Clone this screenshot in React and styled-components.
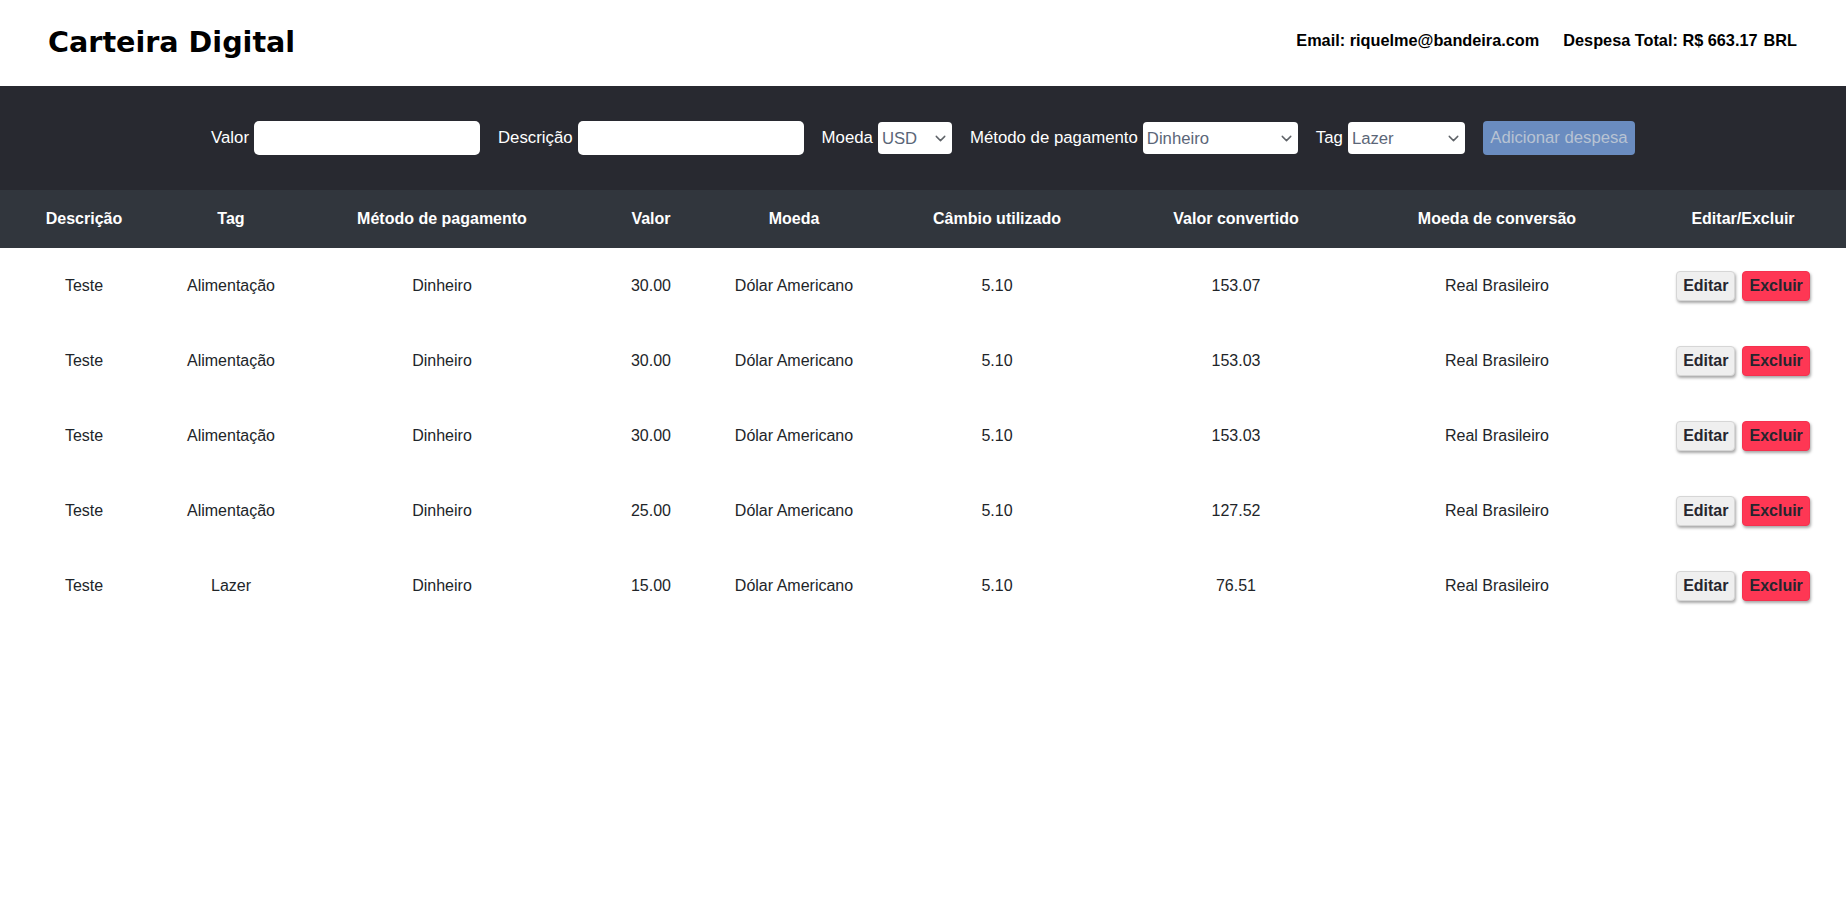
import React from "react";
import styled, { createGlobalStyle } from "styled-components";
import { ChevronDown } from "lucide-react";

const GlobalStyle = createGlobalStyle`
  body {
    margin: 0;
    font-family: "Liberation Sans", Arial, sans-serif;
    background: #fff;
  }
`;

const expenses = [
  { description: "Teste", tag: "Alimentação", method: "Dinheiro", value: "30.00", currency: "Dólar Americano", rate: "5.10", converted: "153.07" },
  { description: "Teste", tag: "Alimentação", method: "Dinheiro", value: "30.00", currency: "Dólar Americano", rate: "5.10", converted: "153.03" },
  { description: "Teste", tag: "Alimentação", method: "Dinheiro", value: "30.00", currency: "Dólar Americano", rate: "5.10", converted: "153.03" },
  { description: "Teste", tag: "Alimentação", method: "Dinheiro", value: "25.00", currency: "Dólar Americano", rate: "5.10", converted: "127.52" },
  { description: "Teste", tag: "Lazer", method: "Dinheiro", value: "15.00", currency: "Dólar Americano", rate: "5.10", converted: "76.51" },
];

const columns = [
  { title: "Descrição", width: 168 },
  { title: "Tag", width: 126 },
  { title: "Método de pagamento", width: 296 },
  { title: "Valor", width: 122 },
  { title: "Moeda", width: 164 },
  { title: "Câmbio utilizado", width: 242 },
  { title: "Valor convertido", width: 236 },
  { title: "Moeda de conversão", width: 286 },
  { title: "Editar/Excluir", width: 206 },
];

function Select({ width, value }) {
  return (
    <SelectWrap $width={width}>
      <SelectBox defaultValue={value}>
        <option>{value}</option>
      </SelectBox>
      <Chevron size={17} strokeWidth={2} />
    </SelectWrap>
  );
}

export default function App() {
  return (
    <>
      <GlobalStyle />
      <Header>
        <Logo>Carteira Digital</Logo>
        <UserInfo>
          <span>Email: riquelme@bandeira.com</span>
          <span>
            Despesa Total: R$ 663.17<Currency>BRL</Currency>
          </span>
        </UserInfo>
      </Header>

      <FormBar>
        <Field>
          Valor
          <TextInput type="text" />
        </Field>
        <Field>
          Descrição
          <TextInput type="text" />
        </Field>
        <Field>
          Moeda
          <Select width={74} value="USD" />
        </Field>
        <Field>
          Método de pagamento
          <Select width={155} value="Dinheiro" />
        </Field>
        <Field>
          Tag
          <Select width={117} value="Lazer" />
        </Field>
        <AddButton type="button" disabled>
          Adicionar despesa
        </AddButton>
      </FormBar>

      <Table>
        <colgroup>
          {columns.map((c) => (
            <col key={c.title} style={{ width: c.width }} />
          ))}
        </colgroup>
        <thead>
          <tr>
            {columns.map((c) => (
              <Th key={c.title}>{c.title}</Th>
            ))}
          </tr>
        </thead>
        <tbody>
          {expenses.map((e, i) => (
            <tr key={i}>
              <Td>{e.description}</Td>
              <Td>{e.tag}</Td>
              <Td>{e.method}</Td>
              <Td>{e.value}</Td>
              <Td>{e.currency}</Td>
              <Td>{e.rate}</Td>
              <Td>{e.converted}</Td>
              <Td>Real Brasileiro</Td>
              <Td>
                <Actions>
                  <ActionButton type="button">Editar</ActionButton>
                  <ActionButton type="button" $danger>
                    Excluir
                  </ActionButton>
                </Actions>
              </Td>
            </tr>
          ))}
        </tbody>
      </Table>
    </>
  );
}

const Header = styled.header`
  height: 86px;
  display: flex;
  align-items: center;
  justify-content: space-between;
  padding: 0 49px 2px 48px;
  box-sizing: border-box;
`;

const Logo = styled.h1`
  margin: 0;
  font-family: "DejaVu Sans", sans-serif;
  font-weight: 700;
  font-size: 28.6px;
  color: #000;
`;

const UserInfo = styled.div`
  display: flex;
  gap: 24px;
  font-weight: 700;
  font-size: 16.3px;
  color: #000;
  margin-bottom: 4px;
`;

const Currency = styled.span`
  margin-left: 6px;
`;

const FormBar = styled.form`
  height: 104px;
  background: #282930;
  display: flex;
  align-items: center;
  justify-content: center;
  gap: 18px;
`;

const Field = styled.label`
  display: flex;
  align-items: center;
  gap: 5px;
  color: #fff;
  font-size: 16.8px;
`;

const TextInput = styled.input`
  width: 226px;
  height: 34px;
  box-sizing: border-box;
  border: none;
  border-radius: 5px;
  background: #fff;
  outline: none;
  padding: 0 8px;
  font-family: "Liberation Sans", Arial, sans-serif;
  font-size: 16px;
`;

const SelectWrap = styled.div`
  position: relative;
  width: ${(p) => p.$width}px;
  height: 32px;
`;

const SelectBox = styled.select`
  appearance: none;
  width: 100%;
  height: 100%;
  border: none;
  border-radius: 4px;
  background: #fff;
  padding: 0 4px;
  font-family: "Liberation Sans", Arial, sans-serif;
  font-size: 16.7px;
  color: #5b6678;
  outline: none;
`;

const Chevron = styled(ChevronDown)`
  position: absolute;
  right: 3px;
  top: 8px;
  color: #5f6368;
  pointer-events: none;
`;

const AddButton = styled.button`
  width: 152px;
  height: 34px;
  border: none;
  border-radius: 4px;
  background: #6a8cc0;
  color: #b8c3d3;
  font-family: "Liberation Sans", Arial, sans-serif;
  font-size: 16.7px;
  padding: 0;
`;

const Table = styled.table`
  width: 100%;
  border-collapse: collapse;
  table-layout: fixed;
`;

const Th = styled.th`
  height: 58px;
  background: #31363d;
  color: #fff;
  font-weight: 700;
  font-size: 16px;
  text-align: center;
  padding: 0;
`;

const Td = styled.td`
  height: 75px;
  text-align: center;
  font-size: 16px;
  color: #212529;
  padding: 0;
`;

const Actions = styled.div`
  display: flex;
  justify-content: center;
  gap: 7px;
`;

const ActionButton = styled.button`
  height: 30px;
  padding: 0 6px;
  border: 1px solid ${(p) => (p.$danger ? "#f5314e" : "#d6d6d6")};
  border-radius: 4px;
  background: ${(p) => (p.$danger ? "#fe3754" : "#efefef")};
  color: #26262e;
  font-family: "Liberation Sans", Arial, sans-serif;
  font-weight: 700;
  font-size: 16px;
  box-shadow: 1px 2px 3px rgba(0, 0, 0, 0.35);
`;
